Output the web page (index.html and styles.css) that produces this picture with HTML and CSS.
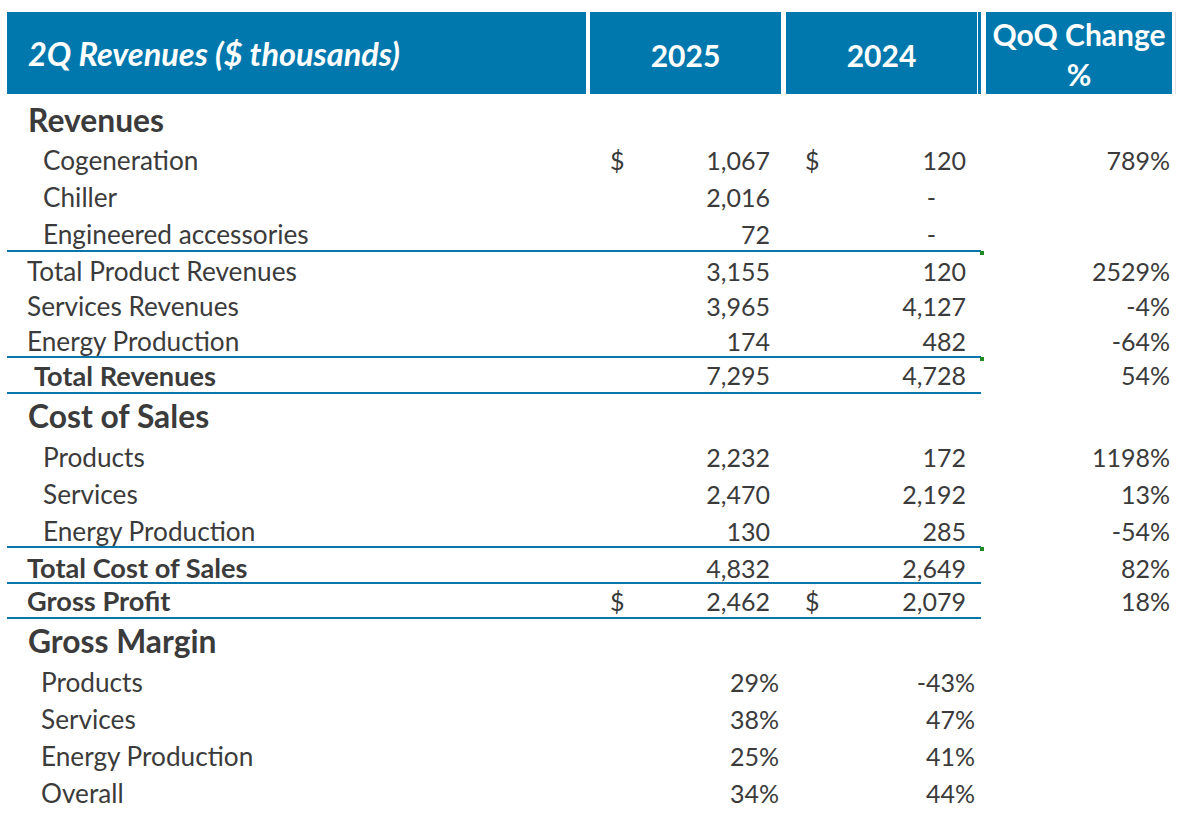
FILE: index.html
```html
<!DOCTYPE html>
<html lang="en">
<head>
<meta charset="utf-8">
<title>2Q Revenues</title>
<link rel="stylesheet" href="styles.css">
</head>
<body>
<div class="sheet">
  <div class="hdr">
    <div class="hcell htitle">2Q Revenues ($ thousands)</div>
    <div class="hcell hyear y25">2025</div>
    <div class="hcell hyear y24">2024</div>
    <div class="hsep"></div>
    <div class="hcell hqoq">QoQ Change<br>%</div>
    <div class="hedge"></div>
  </div>

  <div class="row head"><div class="lbl">Revenues</div></div>
  <div class="row sub"><div class="lbl">Cogeneration</div><div class="num n1"><span>$</span><span>1,067</span></div><div class="num n2"><span>$</span><span>120</span></div><div class="chg">789%</div></div>
  <div class="row sub"><div class="lbl">Chiller</div><div class="num n1"><span></span><span>2,016</span></div><div class="num n2"><span></span><span class="dash">-</span></div><div class="chg"></div></div>
  <div class="row sub short"><div class="lbl">Engineered accessories</div><div class="num n1"><span></span><span>72</span></div><div class="num n2"><span></span><span class="dash">-</span></div><div class="chg"></div></div>
  <div class="rule dot"></div>
  <div class="row tot r37"><div class="lbl">Total Product Revenues</div><div class="num n1"><span></span><span>3,155</span></div><div class="num n2"><span></span><span>120</span></div><div class="chg">2529%</div></div>
  <div class="row tot r34"><div class="lbl">Services Revenues</div><div class="num n1"><span></span><span>3,965</span></div><div class="num n2"><span></span><span>4,127</span></div><div class="chg">-4%</div></div>
  <div class="row tot r33"><div class="lbl">Energy Production</div><div class="num n1"><span></span><span>174</span></div><div class="num n2"><span></span><span>482</span></div><div class="chg">-64%</div></div>
  <div class="rule dot"></div>
  <div class="row bold r34 tr"><div class="lbl">Total Revenues</div><div class="num n1"><span></span><span>7,295</span></div><div class="num n2"><span></span><span>4,728</span></div><div class="chg">54%</div></div>
  <div class="rule"></div>

  <div class="row head h44"><div class="lbl">Cost of Sales</div></div>
  <div class="row sub"><div class="lbl">Products</div><div class="num n1"><span></span><span>2,232</span></div><div class="num n2"><span></span><span>172</span></div><div class="chg">1198%</div></div>
  <div class="row sub"><div class="lbl">Services</div><div class="num n1"><span></span><span>2,470</span></div><div class="num n2"><span></span><span>2,192</span></div><div class="chg">13%</div></div>
  <div class="row sub r34 low"><div class="lbl">Energy Production</div><div class="num n1"><span></span><span>130</span></div><div class="num n2"><span></span><span>285</span></div><div class="chg">-54%</div></div>
  <div class="rule dot"></div>
  <div class="row bold r34 low"><div class="lbl">Total Cost of Sales</div><div class="num n1"><span></span><span>4,832</span></div><div class="num n2"><span></span><span>2,649</span></div><div class="chg">82%</div></div>
  <div class="rule"></div>
  <div class="row bold r33"><div class="lbl">Gross Profit</div><div class="num n1"><span>$</span><span>2,462</span></div><div class="num n2"><span>$</span><span>2,079</span></div><div class="chg">18%</div></div>
  <div class="rule"></div>

  <div class="row head h44"><div class="lbl">Gross Margin</div></div>
  <div class="row sub gm"><div class="lbl">Products</div><div class="pct p1">29%</div><div class="pct p2">-43%</div><div class="chg"></div></div>
  <div class="row sub gm"><div class="lbl">Services</div><div class="pct p1">38%</div><div class="pct p2">47%</div><div class="chg"></div></div>
  <div class="row sub gm"><div class="lbl">Energy Production</div><div class="pct p1">25%</div><div class="pct p2">41%</div><div class="chg"></div></div>
  <div class="row sub gm"><div class="lbl">Overall</div><div class="pct p1">34%</div><div class="pct p2">44%</div><div class="chg"></div></div>
</div>
</body>
</html>
```

FILE: styles.css
```css
html, body {
  margin: 0;
  padding: 0;
  background: #ffffff;
}

body {
  font-family: Lato, "Open Sans", "Liberation Sans", sans-serif;
  color: #3b3b3b;
}

.sheet {
  padding: 12px 0 0 7px;
  width: 1173px;
}

/* ---------- header ---------- */
.hdr {
  display: flex;
  height: 82px;
}

.hcell {
  background: #0078ad;
  color: #ffffff;
  font-weight: 700;
  font-size: 30px;
  display: flex;
  align-items: center;
}

.htitle {
  width: 579px;
  padding-left: 21px;
  box-sizing: border-box;
  font-style: italic;
  font-size: 32.5px;
}

.hyear {
  width: 191px;
  justify-content: center;
  padding-top: 4px;
  box-sizing: border-box;
}

.y25 { margin-left: 4px; }
.y24 { margin-left: 5px; }

.hsep {
  width: 3px;
  margin-left: 1px;
  background: #0078ad;
}

.hqoq {
  width: 186px;
  margin-left: 5px;
  text-align: center;
  justify-content: center;
  align-items: flex-start;
  line-height: 40px;
  padding-top: 2px;
  box-sizing: border-box;
}

.hedge {
  width: 1px;
  margin-left: 3px;
  background: #e4e4e4;
}

/* ---------- rows ---------- */
.row {
  display: grid;
  grid-template-columns: 581px 196px 197px 191px;
  align-items: center;
  height: 37px;
  font-size: 25px;
  box-sizing: border-box;
}

.row .lbl {
  white-space: nowrap;
  font-size: 26.2px;
}

.head {
  height: 47px;
  padding-top: 5px;
  font-weight: 700;
}

.head .lbl {
  padding-left: 21px;
  font-size: 31.8px;
}

.h44 { height: 44px; padding-top: 0; }

.sub .lbl { padding-left: 36px; }
.gm .lbl { padding-left: 34px; }
.tot .lbl { padding-left: 20px; }
.bold .lbl {
  padding-left: 20px;
  font-weight: 700;
  font-size: 27.2px;
}
.tr .lbl { padding-left: 27px; }

.short { height: 35px; padding-top: 2px; }
.r37 { height: 37px; }
.r34 { height: 34px; }
.r33 { height: 33px; padding-top: 2px; }
.low { padding-top: 3px; }

.bold.r33 { padding-top: 0; }

.num {
  display: flex;
  justify-content: space-between;
  font-weight: 400;
}

.n1 { padding: 0 14px 0 22px; }
.n2 { padding: 0 15px 0 21px; }

.dash { padding-right: 30px; }

.pct {
  text-align: right;
}

.p1 { padding-right: 5px; }
.p2 { padding-right: 6px; }

.chg {
  text-align: right;
  padding-right: 2px;
  font-weight: 400;
}

/* ---------- rules ---------- */
.rule {
  width: 974px;
  height: 2px;
  background: #0a77ab;
  position: relative;
}

.rule.dot::after {
  content: "";
  position: absolute;
  left: 973px;
  top: 1px;
  width: 4px;
  height: 4px;
  background: #1f8a1f;
}
```
